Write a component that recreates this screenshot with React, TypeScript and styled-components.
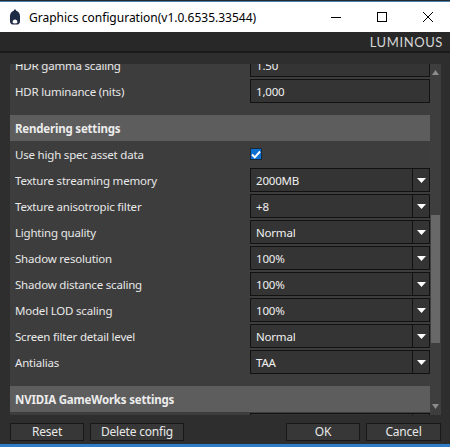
import { useLayoutEffect, useRef } from "react";
import styled, { createGlobalStyle } from "styled-components";

const GlobalStyle = createGlobalStyle`
  html, body {
    margin: 0;
    padding: 0;
    background: #2e2e2e;
  }
  body {
    font-family: "Noto Sans", "Open Sans", sans-serif;
    font-size: 11.5px;
    letter-spacing: -0.2px;
  }
`;

type RowKind = "select" | "text" | "check";

interface SettingRow {
  label: string;
  kind: RowKind;
  value?: string;
  checked?: boolean;
}

interface Section {
  title: string;
  rows: SettingRow[];
}

const sections: Section[] = [
  {
    title: "Display settings",
    rows: [
      { label: "Display mode", kind: "select", value: "Fullscreen" },
      { label: "Resolution", kind: "select", value: "1920x1080" },
      { label: "Refresh rate", kind: "select", value: "60Hz" },
      { label: "VSync", kind: "check", checked: true },
      { label: "Frame rate limit", kind: "select", value: "Off" },
      { label: "Dynamic resolution", kind: "check", checked: false },
      { label: "Rendering resolution", kind: "select", value: "100%" },
      { label: "HDR", kind: "check", checked: true },
      { label: "HDR gamma scaling", kind: "text", value: "1.50" },
      { label: "HDR luminance (nits)", kind: "text", value: "1,000" },
    ],
  },
  {
    title: "Rendering settings",
    rows: [
      { label: "Use high spec asset data", kind: "check", checked: true },
      { label: "Texture streaming memory", kind: "select", value: "2000MB" },
      { label: "Texture anisotropic filter", kind: "select", value: "+8" },
      { label: "Lighting quality", kind: "select", value: "Normal" },
      { label: "Shadow resolution", kind: "select", value: "100%" },
      { label: "Shadow distance scaling", kind: "select", value: "100%" },
      { label: "Model LOD scaling", kind: "select", value: "100%" },
      { label: "Screen filter detail level", kind: "select", value: "Normal" },
      { label: "Antialias", kind: "select", value: "TAA" },
    ],
  },
  {
    title: "NVIDIA GameWorks settings",
    rows: [
      { label: "NVIDIA HairWorks", kind: "select", value: "Off" },
      { label: "NVIDIA Turf Effects", kind: "select", value: "Off" },
      { label: "NVIDIA ShadowLibs", kind: "select", value: "Off" },
      { label: "NVIDIA VXAO", kind: "select", value: "Off" },
      { label: "NVIDIA Flow", kind: "select", value: "Off" },
    ],
  },
];

const Window = styled.div`
  width: 450px;
  height: 447px;
  display: flex;
  flex-direction: column;
  background: #2e2e2e;
  overflow: hidden;
`;

const DesktopStrip = styled.div`
  height: 2px;
  background: linear-gradient(to bottom, #23282c 50%, #4a7fb0 50%);
`;

const TitleBar = styled.div`
  height: 30px;
  background: #ffffff;
  display: flex;
  align-items: center;
`;

const AppIcon = styled.svg`
  margin-left: 9px;
  width: 12px;
  height: 16px;
`;

const TitleText = styled.div`
  margin-left: 8px;
  flex: 1;
  color: #000;
  font-size: 12px;
  letter-spacing: 0;
  white-space: nowrap;
`;

const Controls = styled.div`
  display: flex;
  height: 100%;
  margin-right: -1px;
`;

const ControlButton = styled.div`
  width: 46px;
  height: 100%;
  display: flex;
  align-items: center;
  justify-content: center;
`;

const BrandBar = styled.div`
  height: 19px;
  background: #282828;
  border-bottom: 2px solid #1a1a1a;
  display: flex;
  align-items: center;
  justify-content: flex-end;
  padding-right: 7px;
`;

const Brand = styled.div`
  font-family: Lato, "Noto Sans", sans-serif;
  font-size: 13px;
  letter-spacing: 0.6px;
  color: #d6d6d6;
  line-height: 1;
  padding-top: 2px;
`;

const Body = styled.div`
  flex: 1;
  display: flex;
  flex-direction: column;
  padding: 11px 9px 0 10px;
`;

const ScrollRow = styled.div`
  display: flex;
  height: 351px;
`;

const Viewport = styled.div`
  position: relative;
  width: 420px;
  height: 100%;
  overflow: hidden;
  background: #3d3d3d;
`;

const SectionHeader = styled.div`
  height: 26px;
  background: #5d5d5d;
  color: #ececec;
  font-weight: 700;
  display: flex;
  align-items: center;
  padding-left: 5px;
`;

const RowList = styled.div`
  display: flex;
  flex-direction: column;
  gap: 2px;
  padding: 1px 0 12px;
`;

const Row = styled.div`
  display: grid;
  grid-template-columns: 240px 180px;
  height: 24px;
  align-items: center;
`;

const Label = styled.div`
  padding-left: 5px;
  color: #e8e8e8;
  white-space: nowrap;
`;

const Field = styled.div`
  box-sizing: border-box;
  height: 24px;
  background: #343434;
  border: 1px solid #121212;
  display: flex;
  align-items: center;
  color: #f0f0f0;
`;

const FieldText = styled.div`
  flex: 1;
  padding-left: 5px;
`;

const ArrowCell = styled.div`
  width: 16px;
  height: 100%;
  border-left: 1px solid #121212;
  display: flex;
  align-items: center;
  justify-content: center;
`;

const CheckBox = styled.div<{ $checked: boolean }>`
  box-sizing: border-box;
  width: 12px;
  height: 12px;
  border: 1px solid #1b2a3a;
  background: ${(p) => (p.$checked ? "#0b6fd0" : "#2a2a2a")};
  display: flex;
  align-items: center;
  justify-content: center;
`;

const ScrollBar = styled.div`
  width: 11px;
  height: 100%;
  background: #3e3e3e;
  display: flex;
  flex-direction: column;
`;

const ScrollArrow = styled.div`
  height: 17px;
  display: flex;
  align-items: center;
  justify-content: center;
`;

const Track = styled.div`
  flex: 1;
  display: flex;
  flex-direction: column;
  align-items: center;
`;

const Thumb = styled.div<{ $offset: number; $size: number }>`
  width: 9px;
  margin-top: ${(p) => p.$offset}px;
  height: ${(p) => p.$size}px;
  background: #686868;
`;

const Footer = styled.div`
  margin-top: 8px;
  display: flex;
  justify-content: space-between;
`;

const ButtonGroup = styled.div`
  display: flex;
  gap: 6px;
`;

const Button = styled.div<{ $w: number }>`
  box-sizing: border-box;
  width: ${(p) => p.$w}px;
  height: 18px;
  background: #373737;
  border: 1px solid #181818;
  color: #e8e8e8;
  display: flex;
  align-items: center;
  justify-content: center;
  font-size: 12px;
  line-height: 16px;
`;

const AccentLine = styled.div`
  margin-top: auto;
  height: 3px;
  margin-left: -10px;
  margin-right: -9px;
  background: #2f7cc9;
`;

const DownTriangle = () => (
  <svg width="9" height="5" viewBox="0 0 9 5">
    <path d="M0 0H9L4.5 5Z" fill="#ffffff" />
  </svg>
);

const Tick = () => (
  <svg width="10" height="9" viewBox="0 0 10 9">
    <path d="M1 4.5L3.8 7.3L9 1.5" stroke="#fff" strokeWidth="2" fill="none" />
  </svg>
);

const RowValue = ({ row }: { row: SettingRow }) => {
  if (row.kind === "check") {
    return (
      <div>
        <CheckBox $checked={!!row.checked}>{row.checked && <Tick />}</CheckBox>
      </div>
    );
  }
  return (
    <Field>
      <FieldText>{row.value}</FieldText>
      {row.kind === "select" && (
        <ArrowCell>
          <DownTriangle />
        </ArrowCell>
      )}
    </Field>
  );
};

const App = () => {
  const viewportRef = useRef<HTMLDivElement>(null);
  const anchorRef = useRef<HTMLDivElement>(null);

  // scroll so that "Rendering settings" sits 51px below the top of the list
  useLayoutEffect(() => {
    if (viewportRef.current && anchorRef.current) {
      viewportRef.current.scrollTop = anchorRef.current.offsetTop - 51;
    }
  }, []);

  return (
    <Window>
      <GlobalStyle />
      <DesktopStrip />
      <TitleBar>
        <AppIcon viewBox="0 0 12 16">
          <path
            d="M6 0.5C5.2 0.5 4.8 1 4.8 1.8C2.4 2.5 1 4.6 1 7.2V12.5C1 14.4 2.6 15.6 4.2 15.6H7.8C9.4 15.6 11 14.4 11 12.5V7.2C11 4.6 9.6 2.5 7.2 1.8C7.2 1 6.8 0.5 6 0.5Z"
            fill="#1f2b45"
          />
          <path d="M3.6 13.2C3.6 11.4 4.6 10.4 6 10.4C7.4 10.4 8.4 11.4 8.4 13.2C8.4 14 7.6 14.4 6 14.4C4.4 14.4 3.6 14 3.6 13.2Z" fill="#ffffff" />
        </AppIcon>
        <TitleText>Graphics configuration(v1.0.6535.33544)</TitleText>
        <Controls>
          <ControlButton>
            <svg width="10" height="10" viewBox="0 0 10 10">
              <path d="M0 5.5H10" stroke="#000" strokeWidth="1" />
            </svg>
          </ControlButton>
          <ControlButton>
            <svg width="10" height="10" viewBox="0 0 10 10">
              <rect x="0.5" y="0.5" width="9" height="9" stroke="#000" fill="none" />
            </svg>
          </ControlButton>
          <ControlButton>
            <svg width="10" height="10" viewBox="0 0 10 10">
              <path d="M0 0L10 10M10 0L0 10" stroke="#000" strokeWidth="1" />
            </svg>
          </ControlButton>
        </Controls>
      </TitleBar>
      <BrandBar>
        <Brand>LUMINOUS</Brand>
      </BrandBar>
      <Body>
        <ScrollRow>
          <Viewport ref={viewportRef}>
            {sections.map((section) => (
              <div key={section.title}>
                <SectionHeader ref={section.title === "Rendering settings" ? anchorRef : undefined}>
                  {section.title}
                </SectionHeader>
                <RowList>
                  {section.rows.map((row) => (
                    <Row key={row.label}>
                      <Label>{row.label}</Label>
                      <RowValue row={row} />
                    </Row>
                  ))}
                </RowList>
              </div>
            ))}
          </Viewport>
          <ScrollBar>
            <ScrollArrow>
              <svg width="7" height="5" viewBox="0 0 7 5">
                <path d="M3.5 0L7 5H0Z" fill="#8c8c8c" />
              </svg>
            </ScrollArrow>
            <Track>
              <Thumb $offset={134} $size={128} />
            </Track>
            <ScrollArrow>
              <svg width="7" height="5" viewBox="0 0 7 5">
                <path d="M0 0H7L3.5 5Z" fill="#8c8c8c" />
              </svg>
            </ScrollArrow>
          </ScrollBar>
        </ScrollRow>
        <Footer>
          <ButtonGroup>
            <Button $w={74}>Reset</Button>
            <Button $w={94}>Delete config</Button>
          </ButtonGroup>
          <ButtonGroup>
            <Button $w={74}>OK</Button>
            <Button $w={75}>Cancel</Button>
          </ButtonGroup>
        </Footer>
        <AccentLine />
      </Body>
    </Window>
  );
};

export default App;
